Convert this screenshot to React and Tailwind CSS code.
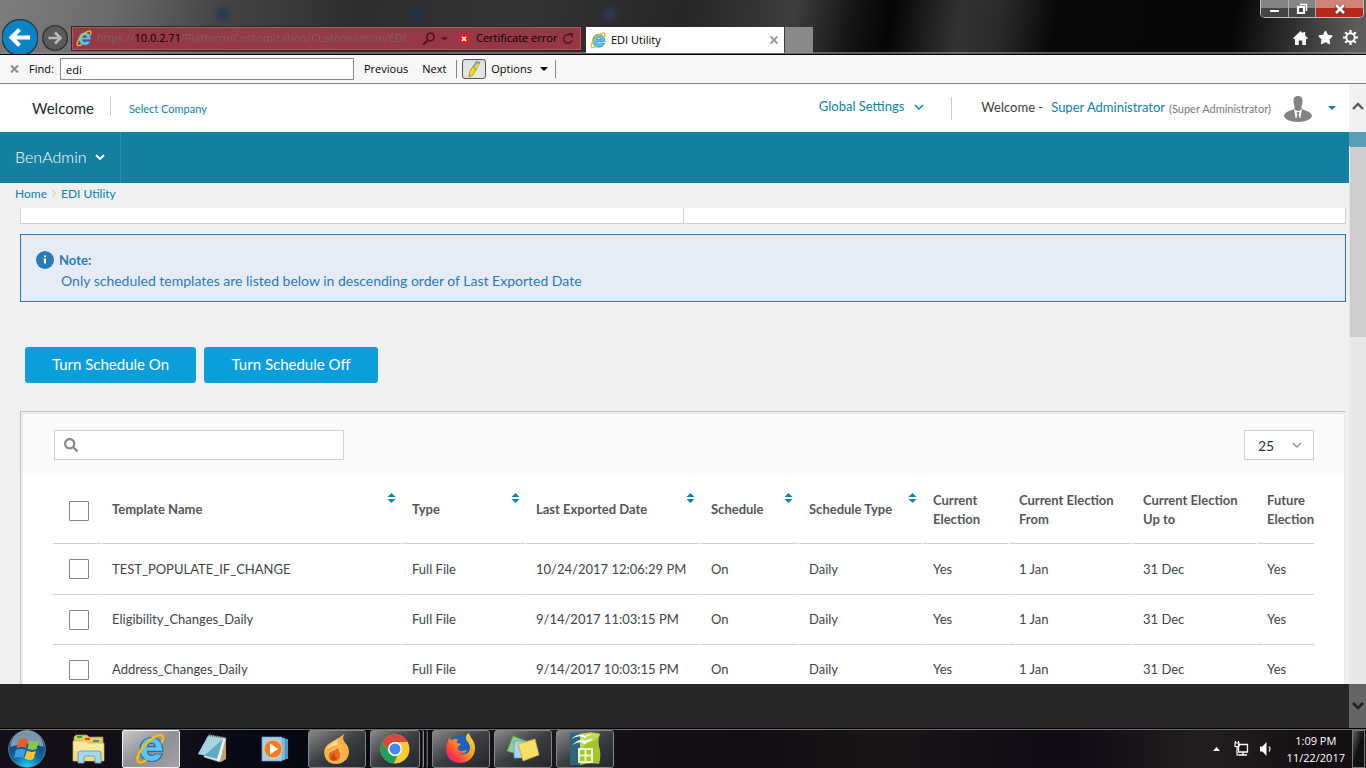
import React from "react";
import { FaSearch, FaStar } from "react-icons/fa";

const IELogo = ({ size }) => (
  <svg width={size} height={size} viewBox="0 0 32 32" className="shrink-0" aria-hidden="true">
    <path
      d="M16.500 4.500C9.500 4.500 5 9.800 5 16.600S9.500 28.500 16.600 28.500c5.300 0 9.200-2.800 10.700-7.500h-7.200c-.7 1-1.800 1.500-3.300 1.500-2.400 0-4-1.500-4.200-4.100h15.200C28 10 24 4.500 16.500 4.500zm-3.900 9.200c.4-2.200 1.800-3.500 3.900-3.500s3.500 1.300 3.800 3.500z"
      fill="#5cc3f3"
      stroke="#1d6fae"
      strokeWidth="1.200"
    />
    <path
      d="M27 9c1.500-3.700 1.500-6-.3-6.700C23.200 1 14.500 6 8.500 13.300 3.600 19.300 1 26.200 3.300 28.600c1.500 1.500 4.200.8 7.200-1"
      fill="none"
      stroke="#f6b90c"
      strokeWidth="2.600"
      strokeLinecap="round"
    />
  </svg>
);

const Chevron = ({ className, width = 1.5 }) => (
  <svg width="10" height="6" viewBox="0 0 10 6" className={className} aria-hidden="true">
    <path d="M1 1l4 4 4-4" fill="none" stroke="currentColor" strokeWidth={width} />
  </svg>
);

const SortIcon = () => (
  <svg width="9" height="10" viewBox="0 0 9 10" aria-hidden="true">
    <path d="M4.500 0L8.500 4H.5zM4.500 10L8.500 6H.5z" fill="#0a80b4" />
  </svg>
);

const columns = [
  { label: "Template Name", sortable: true },
  { label: "Type", sortable: true },
  { label: "Last Exported Date", sortable: true },
  { label: "Schedule", sortable: true },
  { label: "Schedule Type", sortable: true },
  { label: "Current Election" },
  { label: "Current Election From" },
  { label: "Current Election Up to" },
  { label: "Future Election" },
];

const rows = [
  ["TEST_POPULATE_IF_CHANGE", "Full File", "10/24/2017 12:06:29 PM", "On", "Daily", "Yes", "1 Jan", "31 Dec", "Yes"],
  ["Eligibility_Changes_Daily", "Full File", "9/14/2017 11:03:15 PM", "On", "Daily", "Yes", "1 Jan", "31 Dec", "Yes"],
  ["Address_Changes_Daily", "Full File", "9/14/2017 10:03:15 PM", "On", "Daily", "Yes", "1 Jan", "31 Dec", "Yes"],
];

function BrowserBar() {
  return (
    <header className="relative flex h-[55px] shrink-0 overflow-hidden border-b border-black bg-[linear-gradient(100deg,#7d7d7d_0%,#6c6c6c_8%,#454545_16%,#2e2e2e_26%,#353535_38%,#262626_50%,#3d3d3d_58%,#161616_62%,#050505_65%,#333_70%,#2a2a2a_73%,#080808_77%,#060606_90%,#5c5c5c_99%)]">
      <div className="absolute left-[217px] top-2 size-3 rounded-full bg-[#1d3558] blur-[3px]" />
      <div className="absolute left-[411px] top-2 size-3 rounded-full bg-[#1d3558] blur-[3px]" />
      <div className="absolute left-[604px] top-2 size-3 rounded-full bg-[#2a405f] blur-[3px]" />
      <div className="relative flex items-start border-b-2 border-[#8c8c8c]/60">
        <button aria-label="Back" className="ml-0.5 mt-[19px]">
          <svg width="36" height="36" viewBox="0 0 36 36">
            <circle cx="18" cy="18.500" r="18" fill="#0a84c6" stroke="#2f3c44" strokeWidth="1.500" />
            <path d="M28 18.500H10M17.500 10.500l-8 8 8 8" fill="none" stroke="#fff" strokeWidth="4" />
          </svg>
        </button>
        <button aria-label="Forward" className="ml-1 mt-[25px]">
          <svg width="26" height="26" viewBox="0 0 26 26">
            <circle cx="13" cy="13" r="12.300" fill="#5a5a5a" stroke="#303030" strokeWidth="1.300" />
            <path d="M6.500 13H18M13 7.500l5.500 5.500-5.500 5.500" fill="none" stroke="#b9b9b9" strokeWidth="2.600" />
          </svg>
        </button>
        <div className="ml-1 mt-[27px] flex h-[23px] w-[509px] items-center border border-[#d4465c] bg-[#983846] pl-[3px] pr-1.5 text-[11px] text-[#351016] outline outline-[#2a2a2a]">
          <IELogo size={17} />
          <div className="ml-1 w-[322px] overflow-hidden whitespace-nowrap text-[#746167]">
            https://<span className="text-black">10.0.2.71</span>/Platform/Customization/Customization/EDI
          </div>
          <svg width="14" height="14" viewBox="0 0 14 14" className="ml-[3px] shrink-0" aria-hidden="true">
            <circle cx="8.500" cy="5" r="3.800" fill="none" stroke="#54161f" strokeWidth="1.800" />
            <path d="M6 8l-5 5" stroke="#54161f" strokeWidth="2.200" />
          </svg>
          <svg width="7" height="4" viewBox="0 0 8 4" className="ml-[5px] shrink-0" aria-hidden="true">
            <path d="M0 0h8L4 4z" fill="#54161f" />
          </svg>
          <svg width="12" height="12" viewBox="0 0 12 12" className="ml-2.5 shrink-0" aria-hidden="true">
            <path d="M6 0l5.500 1.500v5C11 9.500 8.500 11.300 6 12 3.500 11.300 1 9.500.5 6.500v-5z" fill="#dd1b23" />
            <path d="M4 3.700l4 4.200M8 3.700L4 7.900" stroke="#fff" strokeWidth="1.600" />
          </svg>
          <span className="ml-1.5 whitespace-nowrap text-black">Certificate error</span>
          <svg width="12" height="12" viewBox="0 0 12 12" className="ml-auto shrink-0" aria-hidden="true">
            <path d="M10 7.200A4.300 4.300 0 1 1 7.500 2" fill="none" stroke="#54161f" strokeWidth="1.600" />
            <path d="M6 0h5v5z" fill="#54161f" />
          </svg>
        </div>
        <div className="ml-[5px] mt-[27px] flex h-[26px] w-[198px] items-center bg-white pl-1 pr-1.5 text-[11px] text-black">
          <IELogo size={17} />
          <span className="ml-1">EDI Utility</span>
          <button aria-label="Close tab" className="ml-auto">
            <svg width="8" height="8" viewBox="0 0 8 8">
              <path d="M.5.5l7 7M7.500.5l-7 7" stroke="#999" strokeWidth="1.900" />
            </svg>
          </button>
        </div>
        <button aria-label="New tab" className="ml-px mt-[27px] h-[26px] w-[28px] bg-[#8a8a8a]" />
      </div>
      <div className="flex flex-1 flex-col items-end border-b-2 border-[#8c8c8c]/60 pr-0.5">
        <div className="flex h-[18px] w-[104px] overflow-hidden rounded-b-[5px] border border-t-0 border-[#bdbdbd]">
          <button aria-label="Minimize" className="flex w-[28px] items-center justify-center border-r border-[#aaa] bg-linear-to-b from-[#858585] from-45% to-[#454545] to-50%">
            <span className="mt-1 h-1 w-[11px] border border-[#444] bg-white" />
          </button>
          <button aria-label="Restore" className="flex w-[27px] items-center justify-center border-r border-[#aaa] bg-linear-to-b from-[#858585] from-45% to-[#454545] to-50%">
            <svg width="12" height="12" viewBox="0 0 12 12">
              <path d="M4 1.500h6.500V8" fill="none" stroke="#fff" strokeWidth="1.500" />
              <path d="M2 4h6v6H2z" fill="none" stroke="#fff" strokeWidth="2.200" />
            </svg>
          </button>
          <button aria-label="Close" className="flex flex-1 items-center justify-center bg-linear-to-b from-[#d08476] from-45% to-[#b8281a] to-50%">
            <svg width="12" height="10" viewBox="0 0 12 10">
              <path d="M1.500 1l9 8M10.500 1l-9 8" stroke="#54424a" strokeWidth="4.200" />
              <path d="M2 1l8 8M10 1L2 9" stroke="#fff" strokeWidth="2.600" />
            </svg>
          </button>
        </div>
        <div className="mt-3 flex items-center gap-2.5 pr-1.5 text-white">
          <button aria-label="Home">
            <svg width="15" height="14" viewBox="0 0 15 14" fill="currentColor">
              <path d="M7.500 0l2.700 2.600V1h2v3.600L15 7.300l-1 1-1-.8V14H9.300V9.500H5.700V14H2V7.500l-1 .8-1-1z" />
            </svg>
          </button>
          <button aria-label="Favorites"><FaStar size={15} /></button>
          <button aria-label="Tools">
            <svg width="15" height="15" viewBox="0 0 15 15" fill="none" stroke="currentColor">
              <circle cx="7.500" cy="7.500" r="4.200" strokeWidth="2" />
              <path d="M7.500 0v3M7.500 12v3M0 7.500h3M12 7.500h3M2.200 2.200l2.100 2.100M10.700 10.700l2.100 2.100M2.200 12.800l2.100-2.100M10.700 4.300l2.100-2.100" strokeWidth="2.200" />
            </svg>
          </button>
        </div>
      </div>
    </header>
  );
}

function FindBar() {
  return (
    <div className="flex h-[29px] shrink-0 items-center border-b border-[#808080] bg-[#f7f7f7] text-[11px] text-black">
      <button aria-label="Close find bar" className="ml-2.5">
        <svg width="9" height="8" viewBox="0 0 9 8">
          <path d="M1 .5l7 7M8 .5l-7 7" stroke="#8a8a8a" strokeWidth="2" />
        </svg>
      </button>
      <label htmlFor="find" className="ml-2.5 w-[31px]">Find:</label>
      <input id="find" defaultValue="edi" className="h-[22px] w-[294px] border border-[#8a8a8a] bg-white px-[5px] outline-none" />
      <button className="ml-2.5">Previous</button>
      <button className="ml-3.5">Next</button>
      <span className="ml-2.5 h-[18px] w-px bg-[#888]" />
      <button aria-label="Highlight all matches" className="ml-[5px] flex h-5 w-6 items-center justify-center rounded-[3px] border border-[#555] bg-[#e6e6e6] shadow-inner">
        <svg width="14" height="17" viewBox="0 0 14 17">
          <path d="M9.500 0L13 1.500 9 9 5 7z" fill="#7fb2c4" stroke="#66808a" strokeWidth=".6" />
          <path d="M10.500 2.500l1.300.7L9 8.500 6.500 7z" fill="#f2e500" />
          <path d="M5.500 6L9 8l-3 6-4 2 .5-5z" fill="#f2e500" stroke="#8c8a30" strokeWidth=".8" />
        </svg>
      </button>
      <button className="ml-[5px] flex items-center gap-2">
        Options
        <svg width="8" height="4" viewBox="0 0 8 4"><path d="M0 0h8L4 4z" /></svg>
      </button>
      <span className="ml-[7px] h-[18px] w-px bg-[#888]" />
    </div>
  );
}

function SiteHeader() {
  return (
    <>
      <div className="flex h-12 shrink-0 items-center bg-white pl-8 pr-[13px] text-[#0d82ab]">
        <span className="text-[15px] text-[#23283a]">Welcome</span>
        <span className="ml-4 mb-1 h-5 w-px bg-[#ccc]" />
        <a href="#company" className="ml-[18px] mt-0.5 text-[11px]">Select Company</a>
        <button className="mb-0.5 ml-auto flex items-center gap-2.5 text-[13px]">
          Global Settings
          <Chevron />
        </button>
        <span className="ml-[27px] h-[23px] w-px bg-[#ccc]" />
        <span className="ml-[29px] text-[13px] text-[#3c3c3c]">Welcome -</span>
        <a href="#profile" className="ml-2 text-[13px]">Super Administrator</a>
        <span className="ml-1 mt-0.5 text-[11px] text-[#77787b]">(Super Administrator)</span>
        <svg width="28" height="26" viewBox="0 0 28 26" className="ml-[13px] mt-0.5" aria-hidden="true">
          <path d="M14 0c3.200 0 4.700 2.200 4.500 5.500-.1 3.500-1.500 8-4.500 8s-4.400-4.500-4.500-8C9.300 2.200 10.800 0 14 0z" fill="#808285" />
          <path d="M10 13c-2 1.500-8.500 2-10 6.500C0 23 6 26 14 26s14-3 14-6.500C26.500 15 20 14.500 18 13z" fill="#808285" />
          <path d="M10 12.500l1.500 9.500h5L18 12.500l-4 2z" fill="#fff" />
          <path d="M10 12q1 3 4 3t4-3l-1-1h-6z" fill="#808285" />
          <path d="M14 15.500l1.500 1.200-.8 1.500 1.100 5h-3.600l1.100-5-.8-1.500z" fill="#808285" />
        </svg>
        <button aria-label="Account menu" className="ml-4">
          <svg width="8" height="4" viewBox="0 0 8 4"><path d="M0 0h8L4 4z" fill="#0d82ab" /></svg>
        </button>
      </div>
      <nav className="flex h-[51px] shrink-0 bg-[#1380a2]">
        <button className="flex w-[121px] items-center gap-2 border-r border-[#2d8eae] pb-0.5 pl-[15px] text-base font-light text-white">
          BenAdmin
          <Chevron width={1.8} />
        </button>
      </nav>
    </>
  );
}

function Checkbox({ label }) {
  return (
    <input
      type="checkbox"
      aria-label={label}
      className="block size-5 appearance-none rounded-[1px] border border-[#80868e] bg-white"
    />
  );
}

function TemplateTable() {
  return (
    <div className="mx-[30px] overflow-hidden">
      <table className="-mx-px w-[1310px] table-fixed border-separate border-spacing-x-px border-spacing-y-0 text-left text-[13px] leading-[19px] text-[#40444c]">
        <colgroup>
          <col className="w-[48px]" />
          <col className="w-[299px]" />
          <col className="w-[123px]" />
          <col className="w-[174px]" />
          <col className="w-[97px]" />
          <col className="w-[123px]" />
          <col className="w-[85px]" />
          <col className="w-[123px]" />
          <col className="w-[123px]" />
          <col />
        </colgroup>
        <thead>
          <tr className="text-[#54565b]">
            <th className="border-b border-[#d0d0d0] pl-4 pt-1.5"><Checkbox label="Select all templates" /></th>
            {columns.map((c, i) => (
              <th key={c.label} className="border-b border-[#d0d0d0] p-0 font-bold">
                <div className="flex h-[70px] items-center justify-between pl-2.5 pr-[5px] pt-[3px]">
                  <span className={i === 8 ? "w-[50px]" : undefined}>{c.label}</span>
                  {c.sortable && (
                    <button aria-label={"Sort by " + c.label} className="mt-[17px] self-start"><SortIcon /></button>
                  )}
                </div>
              </th>
            ))}
          </tr>
        </thead>
        <tbody>
          {rows.map((r) => (
            <tr key={r[0]} className="h-[50px] first:h-[51px]">
              <td className="border-b border-[#d0d0d0] p-0 pl-4"><Checkbox label={"Select " + r[0]} /></td>
              {r.map((v, i) => (
                <td key={i} className="whitespace-nowrap border-b border-[#d0d0d0] p-0 pl-2.5">{v}</td>
              ))}
            </tr>
          ))}
        </tbody>
      </table>
    </div>
  );
}

function Content() {
  return (
    <main className="flex min-h-0 flex-1 flex-col overflow-hidden bg-[#f0f0f0] pl-5 pr-[3px]">
      <div className="-ml-[5px] flex h-[25px] shrink-0 items-center gap-[5px] pb-1 text-[12px] text-[#0d82ab]">
        <a href="#home">Home</a>
        <svg width="4" height="7" viewBox="0 0 4 7" aria-hidden="true"><path d="M.5.5l3 3-3 3" fill="none" stroke="#bbb" /></svg>
        <a href="#edi">EDI Utility</a>
      </div>
      <div className="flex h-4 shrink-0 border border-t-0 border-[#d0d0d0] bg-white">
        <div className="flex-1 border-r border-[#d0d0d0]" />
        <div className="flex-1" />
      </div>
      <section className="mt-2.5 h-[68px] shrink-0 border border-[#2a7ab8] bg-[#e6ecf7] pl-[15px] pt-[15px] text-[14px] leading-5 text-[#2a7ab8]">
        <div className="flex items-center gap-[5px] font-bold">
          <svg width="18" height="18" viewBox="0 0 18 18" aria-hidden="true">
            <circle cx="9" cy="9" r="9" fill="#2a7ab8" />
            <path d="M8 4.500h2v1.800H8zM7.500 7.500H10v5H8V8.700h-.5z" fill="#fff" />
          </svg>
          <span className="text-[13px]">Note:</span>
        </div>
        <p className="pl-[25px] pt-px">Only scheduled templates are listed below in descending order of Last Exported Date</p>
      </section>
      <div className="ml-[5px] mt-[45px] flex shrink-0 gap-2 text-[15px] text-white">
        <button className="h-9 w-[171px] rounded-[3px] bg-[#0a9fdc] pb-0.5">Turn Schedule On</button>
        <button className="h-9 w-[174px] rounded-[3px] bg-[#0a9fdc] pb-0.5">Turn Schedule Off</button>
      </div>
      <section className="mt-7 min-h-0 flex-1 overflow-hidden border-l border-t border-[#c6c6c6] bg-[#ebebeb] pl-0.5 pr-0.5 pt-0.5">
        <div className="h-full overflow-hidden rounded-t bg-white">
          <div className="flex h-[59px] items-center justify-between bg-[#f9fbfa] pl-[31px] pr-[30px] pt-[3px]">
            <label className="flex h-[30px] w-[290px] items-center border border-[#d0d0d0] bg-white pl-[9px]">
              <FaSearch size={14} color="#868c92" />
              <input type="search" aria-label="Search templates" className="ml-2 h-full min-w-0 flex-1 text-[13px] outline-none" />
            </label>
            <div className="relative">
              <select aria-label="Rows per page" defaultValue="25" className="block h-[30px] w-[70px] appearance-none border border-[#d0d0d0] bg-white pl-[13px] text-[14px] text-[#2e3138]">
                <option>10</option>
                <option>25</option>
                <option>50</option>
              </select>
              <Chevron className="pointer-events-none absolute right-3 top-3 text-[#8a9096]" width={1.4} />
            </div>
          </div>
          <TemplateTable />
        </div>
      </section>
    </main>
  );
}

function ScrollBar() {
  return (
    <div className="flex w-[17px] shrink-0 flex-col bg-[#e8e8e8]" aria-hidden="true">
      <div className="flex h-12 items-center justify-center bg-[#f0f0f0] pb-1">
        <svg width="12" height="8" viewBox="0 0 12 8"><path d="M1 7l5-5 5 5" fill="none" stroke="#585858" strokeWidth="2.400" /></svg>
      </div>
      <div className="h-[14px] bg-[#5a9fb8]" />
      <div className="ml-px h-[191px] border-t border-[#6f97a6] bg-[#cdcdcd]" />
      <div className="mt-auto flex h-11 items-center justify-center bg-[#656565]">
        <svg width="12" height="8" viewBox="0 0 12 8"><path d="M1 1l5 5 5-5" fill="none" stroke="#222" strokeWidth="2.600" /></svg>
      </div>
    </div>
  );
}

const Explorer = () => (
  <svg width="34" height="32" viewBox="0 0 34 32">
    <path d="M2 4l2-2h11l2 2h14v22H2z" fill="#e9c95c" stroke="#a98a2e" strokeWidth=".7" />
    <path d="M5 3h5v2H5z" fill="#2aa838" /><path d="M13 5h5v2h-5z" fill="#d8442c" /><path d="M21 7h6v2h-6z" fill="#2f8ad8" />
    <path d="M1 8h13l2 2h16v18H1z" fill="#fbe9a0" stroke="#c9a94a" strokeWidth=".7" />
    <path d="M2 18h30v9H2z" fill="#f5da80" />
    <path d="M6 30V21q0-3 3-3h17q3 0 3 3v9h-6v-5q0-2-2-2h-7q-2 0-2 2v5z" fill="#a9d8ee" stroke="#5ea4c6" />
  </svg>
);
const Notepad = () => (
  <svg width="34" height="32" viewBox="0 0 34 32">
    <path d="M12 3l18 3v20l-5 3z" fill="#c8a25c" />
    <path d="M13 2l17 3-6 24-16-5z" fill="#e8f0f3" stroke="#a5b2b8" strokeWidth=".7" />
    <path d="M12 3l15 3-6 20-19-5z" fill="#5eabc0" /><path d="M12 3l15 3-18 16-7-1z" fill="#a6d5df" />
    <path d="M12 2l18 3" stroke="#555" strokeWidth="2" strokeDasharray="1 1" />
  </svg>
);
const MediaPlayer = () => (
  <svg width="28" height="28" viewBox="0 0 28 28">
    <path d="M8 4h19v20H8z" fill="#4f97c8" /><path d="M5 3h19v22H5z" fill="#83bfe3" stroke="#4b88b3" strokeWidth=".6" />
    <path d="M1 2h20v24H1z" fill="#a5cfe9" stroke="#6ba3c7" strokeWidth=".7" />
    <circle cx="12" cy="14" r="9" fill="#f47b20" stroke="#fbd0a6" strokeWidth=".8" /><path d="M9 8.500l8 5.500-8 5.500z" fill="#fff" />
  </svg>
);
const Flame = () => (
  <svg width="28" height="32" viewBox="0 0 28 32">
    <path d="M22 0c-4 6-1 8 2 12 5 8 0 19-11 19C5 31 0 25 1.500 17 3 9 14 8 22 0z" fill="#f8b144" />
    <path d="M16 5C10 10 4 12 3 18c4-5 8-5 12-6-1-2-1-4 1-7z" fill="#fdd68a" />
    <path d="M16 13c-1 4 2 5 2 9 0 9-13 9-13 1 0-6 7-5 11-10z" fill="#ec6c1c" stroke="#fbd08a" />
    <path d="M12 20c-3 1-5 3-4 6 2 3 7 1 6-2-1 1-3 0-2-4z" fill="#c94b12" />
  </svg>
);
const Chrome = () => (
  <svg width="30" height="30" viewBox="0 0 30 30">
    <circle cx="15" cy="15" r="14.500" fill="#fcc934" />
    <path d="M2.300 8A14.500 14.500 0 0 1 27.700 8H15a7 7 0 0 0-6 10.500z" fill="#d9483b" />
    <path d="M2.300 8L9 18.500a7 7 0 0 0 8.500 3L13.800 29.500A14.500 14.500 0 0 1 2.300 8z" fill="#1fa05a" />
    <circle cx="15" cy="15" r="7" fill="#fff" /><circle cx="15" cy="15" r="5.500" fill="#4486f4" />
  </svg>
);
const Firefox = () => (
  <svg width="32" height="32" viewBox="0 0 32 32">
    <defs>
      <linearGradient id="fox" x1="1" y1="0" x2="0" y2="1">
        <stop offset="0" stopColor="#ffef3a" /><stop offset=".45" stopColor="#ff9a1a" /><stop offset=".75" stopColor="#ff3647" /><stop offset="1" stopColor="#d8149a" />
      </linearGradient>
    </defs>
    <circle cx="16" cy="15" r="12.500" fill="#1b60c4" />
    <path d="M3 8q0-2 1.500-3.500Q5 7 7 7q3-1.500 6-.5-2 1.500-1 3.500l4 1-3 3q-1 2 1 3.500c3 2 5-1 8 0-2 3-6 3.500-8 2.500 4 3 11 1 11-5 0-5-3-6-4-9-.5-3 1-5 3-6 0 4 6 7 6 15 0 9-7 15-15 15S1 24 1 17c0-4 1-6 2-9z" fill="url(#fox)" />
  </svg>
);
const Notes = () => (
  <svg width="34" height="28" viewBox="0 0 34 28">
    <path d="M7 1l13 5-6 14-13-4z" fill="#8fd18c" stroke="#4fa052" strokeWidth=".8" />
    <path d="M8 6h13v17H8z" fill="#a9d4f3" stroke="#5b96c5" strokeWidth=".8" />
    <path d="M12 9l17-5 4 16-16 6z" fill="#f8df68" stroke="#c7a33a" strokeWidth=".8" />
  </svg>
);
const OpenOffice = () => (
  <svg width="32" height="34" viewBox="0 0 32 34">
    <path d="M1 1h12v32H1z" fill="#2f6578" /><path d="M11 2q12-3 20 0-3 8 0 16 1 8-1 14-8-2-19 1z" fill="#a3c52c" />
    <path d="M11 2q12-3 20 0-3 6-12 9-6 3-8 10z" fill="#c0d860" />
    <path d="M2 7q9-7 14-3 5-3 7-1-5 0-7 3-5-4-14 1zM3 13q9-8 13-4 6-3 8-1-6 1-8 4-5-4-13 1z" fill="#fff" />
    <path d="M10 17h13v13H10zM16.500 17v13M10 23.500h13" fill="none" stroke="#edf5c8" strokeWidth="2" />
  </svg>
);

const taskItems = [
  { name: "File Explorer", Icon: Explorer, state: "none" },
  { name: "Internet Explorer", Icon: () => <IELogo size={32} />, state: "active" },
  { name: "Notepad", Icon: Notepad, state: "none" },
  { name: "Media Player", Icon: MediaPlayer, state: "none" },
  { name: "Burner", Icon: Flame, state: "open" },
  { name: "Chrome", Icon: Chrome, state: "stack" },
  { name: "Firefox", Icon: Firefox, state: "open" },
  { name: "Sticky Notes", Icon: Notes, state: "open" },
  { name: "Spreadsheet", Icon: OpenOffice, state: "open" },
];

const openStyle = "rounded-[3px] border border-[#858585] bg-linear-to-br from-[#8a8a8a] via-[#3a3d42] via-50% to-[#24272c]";
const taskStyles = {
  none: "w-[58px]",
  active: "w-[58px] rounded-[2px] border border-[#f0f0f0] bg-linear-to-br from-[#c9c9cb] via-[#8f8f94] via-50% to-[#a2a2a6]",
  open: "w-[58px] " + openStyle,
  stack: "w-[50px] " + openStyle,
};

function Taskbar() {
  return (
    <footer className="flex h-10 shrink-0 items-center border-t border-black bg-[linear-gradient(90deg,#130f18_0%,#150f1a_12%,#060a14_18%,#030810_25%,#1e181c_42%,#150f16_46%,#120d12_55%,#1b1519_65%,#0f0a14_78%,#241d20_88%,#141014_96%)] font-['Open_Sans','Noto_Sans',sans-serif] text-[11px] text-white shadow-[inset_0_1px_0_#6c6c6c]">
      <button aria-label="Start" className="ml-2 mr-[14px]">
        <svg width="38" height="38" viewBox="0 0 38 38">
          <defs>
            <radialGradient id="orb" cx=".5" cy="1" r=".95">
              <stop offset="0" stopColor="#27d3ff" /><stop offset=".4" stopColor="#0d6faa" /><stop offset="1" stopColor="#0b3558" />
            </radialGradient>
          </defs>
          <circle cx="19" cy="19" r="18.300" fill="url(#orb)" stroke="#5f8496" />
          <path d="M2.500 17a16.500 16.500 0 0 1 33 0Q19 10 2.500 17z" fill="#c2d2dc" opacity=".6" />
          <path d="M11 10q4-3 9-.5L18 18q-4-2-9.500 0z" fill="#ee5a24" />
          <path d="M21.500 10.500q5 2.500 9.500 0L28.500 19q-5 2-9-.5z" fill="#8fc441" />
          <path d="M8 20q5-2 9.500 0L15 28q-4-2-9 0z" fill="#3c9ee0" />
          <path d="M19 20.500q4 2.500 9 .5l-2.500 8q-4.500 2-9-.5z" fill="#fcc62e" />
        </svg>
      </button>
      <div className="flex gap-1">
        {taskItems.map(({ name, Icon, state }) => (
          <div key={name} className="flex gap-0.5">
            <button aria-label={name} className={"flex h-[38px] items-center justify-center " + taskStyles[state]}>
              <Icon />
            </button>
            {state === "stack" && (
              <>
                <span className="h-[38px] w-0.5 rounded-r-[3px] border-r border-[#858585] bg-[#3a3a3a]" />
                <span className="h-[38px] w-0.5 rounded-r-[3px] border-r border-[#666] bg-[#2a2a2a]" />
              </>
            )}
          </div>
        ))}
      </div>
      <div className="ml-auto flex items-center">
        <button aria-label="Show hidden icons">
          <svg width="7" height="4" viewBox="0 0 7 4"><path d="M3.500 0L7 4H0z" fill="#fff" /></svg>
        </button>
        <svg width="15" height="16" viewBox="0 0 15 16" className="ml-[14px]" aria-label="Network">
          <path d="M4.500 3.500h9v7.500h-9zM9 11v3M5 14h8" fill="none" stroke="#fff" strokeWidth="1.300" />
          <path d="M1 2h4v3.500H1zM1.500 0v2M4.500 0v2M3 5v9h3" fill="none" stroke="#fff" strokeWidth="1.200" />
        </svg>
        <svg width="12" height="14" viewBox="0 0 12 14" className="ml-[11px]" aria-label="Volume">
          <path d="M0 4.500h2.500L6.500 0v14L2.500 9.500H0z" fill="#fff" />
          <path d="M9 4.500q2 2.500 0 5" fill="none" stroke="#ccc" strokeWidth="1.300" />
        </svg>
        <div className="ml-[15px] text-center leading-[17px]">
          <div>1:09 PM</div>
          <div>11/22/2017</div>
        </div>
        <button aria-label="Show desktop" className="ml-[7px] mr-px h-[38px] w-[13px] border border-[#777] bg-linear-to-br from-[#666] to-[#111] to-50%" />
      </div>
    </footer>
  );
}

export default function App() {
  return (
    <div className="flex h-screen flex-col overflow-hidden bg-[#262626] font-['Open_Sans','Noto_Sans',sans-serif]">
      <BrowserBar />
      <FindBar />
      <div className="flex min-h-0 flex-1 font-[Lato,sans-serif]">
        <div className="flex min-w-0 flex-1 flex-col">
          <SiteHeader />
          <Content />
          <div className="h-11 shrink-0 bg-[#262626]" />
        </div>
        <ScrollBar />
      </div>
      <Taskbar />
    </div>
  );
}
